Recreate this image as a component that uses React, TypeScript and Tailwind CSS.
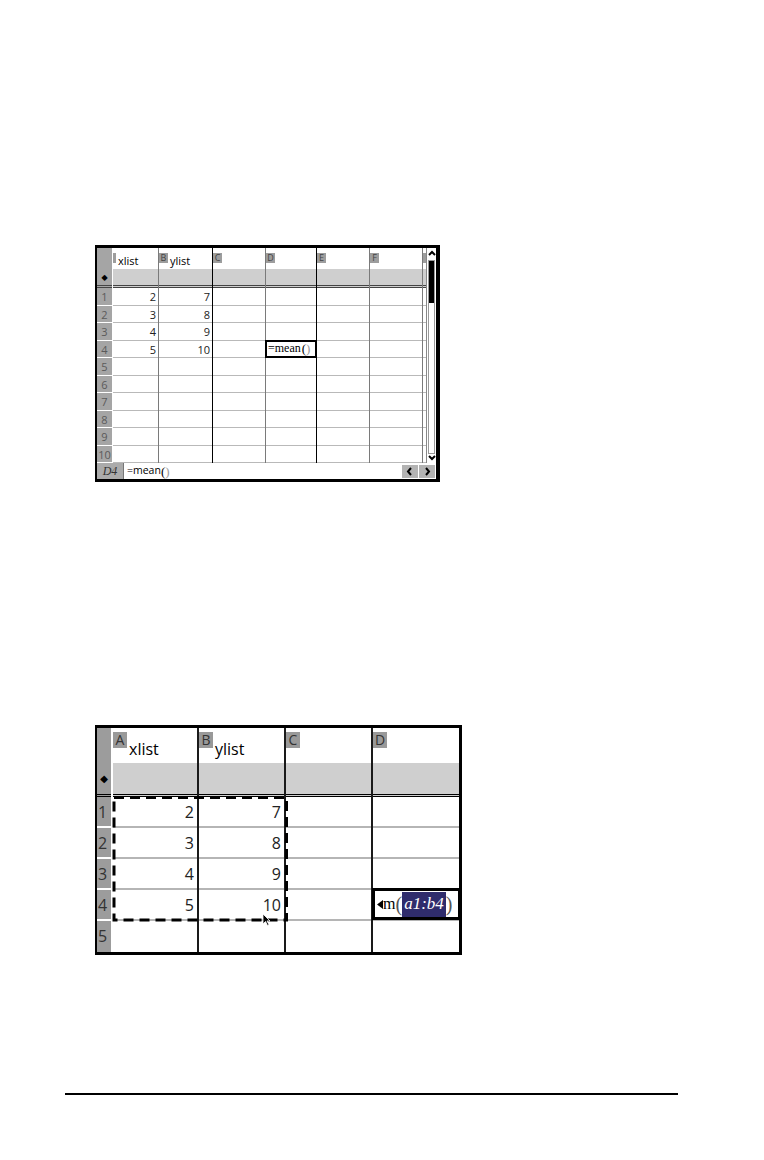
const sans = "font-['Open_Sans','DejaVu_Sans',sans-serif]";
const serif = "font-['Liberation_Serif','Times_New_Roman',serif]";

type Col = {
  letter: string;
  label?: string;
  w: string;
  line: string;
  values: string[];
  selected?: boolean;
};

const smallCols: Col[] = [
  { letter: "A", label: "xlist", w: "w-[46px]", line: "border-[#7a7a7a]", values: ["2", "3", "4", "5"] },
  { letter: "B", label: "ylist", w: "w-[54px]", line: "border-black", values: ["7", "8", "9", "10"] },
  { letter: "C", w: "w-[53px]", line: "border-[#7a7a7a]", values: [] },
  { letter: "D", w: "w-[51px]", line: "border-black", values: [], selected: true },
  { letter: "E", w: "w-[53px]", line: "border-[#7a7a7a]", values: [] },
  { letter: "F", w: "w-[53px]", line: "border-[#7a7a7a]", values: [] },
];

const bigCols: Col[] = [
  { letter: "A", label: "xlist", w: "w-[86px] border-r-2", line: "border-[#1a1a1a]", values: ["2", "3", "4", "5"] },
  { letter: "B", label: "ylist", w: "w-[87px] border-r-2", line: "border-[#1a1a1a]", values: ["7", "8", "9", "10"] },
  { letter: "C", w: "w-[87px] border-r-2", line: "border-[#1a1a1a]", values: [] },
  { letter: "D", w: "w-[86px]", line: "border-[#1a1a1a]", values: [], selected: true },
];

const tenRows = [1, 2, 3, 4, 5, 6, 7, 8, 9, 10];
const fiveRows = [1, 2, 3, 4, 5];

function Chevron({ dir }: { dir: "up" | "down" | "left" | "right" }) {
  const pts = {
    up: "1,5 4,2 7,5",
    down: "1,2 4,5 7,2",
    left: "5,1 2,4.5 5,8",
    right: "3,1 6,4.5 3,8",
  }[dir];
  return (
    <svg width="8" height="9" viewBox="0 0 8 9" className="block">
      <polyline points={pts} fill="none" stroke="black" strokeWidth="2" />
    </svg>
  );
}

function SmallSheet() {
  return (
    <div className={`ml-[95px] mt-[245px] flex w-[345px] flex-col self-start border-t-[3px] border-r-4 border-b-[3px] border-l-2 border-black ${sans}`}>
      <div className="flex">
        {/* row numbers */}
        <div className="flex w-[16px] flex-col border-r border-white bg-[#a5a5a5] text-[11px] text-[#5a5a5a]">
          <div className="h-[21px]" />
          <div className="flex h-[19px] items-center justify-center border-b-[3px] border-double border-[#444] text-[8px] text-black">◆</div>
          {tenRows.map((n) => (
            <div key={n} className="h-[17.5px] border-b border-white text-center leading-[17px]">
              {n}
            </div>
          ))}
        </div>

        {smallCols.map((c) => (
          <div key={c.letter} className={`flex ${c.w} flex-col border-r ${c.line}`}>
            <div className="flex h-[21px] items-start bg-white">
              {c.letter === "A" ? (
                <div className="mt-[5px] h-[10px] w-[3px] bg-[#9d9d9d]" />
              ) : (
                <div className="mt-[5px] h-[10px] w-[9px] bg-[#9d9d9d] text-center text-[9px] leading-[10px] text-[#444]">{c.letter}</div>
              )}
              {c.label && <div className="mt-[5px] ml-[2px] text-[11px] leading-[15px] text-black">{c.label}</div>}
            </div>
            <div className="h-[19px] border-b-[3px] border-double border-[#444] bg-[#cfcfcf]" />
            {tenRows.map((n) => (
              <div key={n} className="relative h-[17.5px] border-b border-[#b9b9b9] pr-[2px] text-right text-[11px] leading-[17px] text-[#222]">
                {c.values[n - 1] ?? ""}
                {c.selected && n === 4 && (
                  <div className={`absolute -top-px -left-px -right-px -bottom-px flex items-center border-2 border-black bg-white pl-[1px] text-left text-[12px] text-black ${serif}`}>
                    =mean
                    <span className="ml-[1px] text-[13px] leading-none">(</span>
                    <span className="text-[13px] leading-none text-[#999]">)</span>
                  </div>
                )}
              </div>
            ))}
          </div>
        ))}

        {/* clipped column G */}
        <div className="flex w-[3px] flex-col">
          <div className="h-[21px]">
            <div className="mt-[5px] h-[10px] w-[3px] bg-[#9d9d9d]" />
          </div>
          <div className="h-[19px] border-b-[3px] border-double border-[#444] bg-[#cfcfcf]" />
          {tenRows.map((n) => (
            <div key={n} className="h-[17.5px] border-b border-[#b9b9b9]" />
          ))}
        </div>

        {/* scrollbar */}
        <div className="flex w-[10px] flex-col border-l border-[#888] bg-white">
          <div className="flex h-[12px] items-end justify-center pb-[1px]">
            <Chevron dir="up" />
          </div>
          <div className="mx-[1px] flex flex-1 flex-col border border-[#999]">
            <div className="h-[42px] bg-black" />
          </div>
          <div className="flex h-[9px] items-center justify-center">
            <Chevron dir="down" />
          </div>
        </div>
      </div>

      {/* entry line */}
      <div className="flex h-[16px] items-center bg-white">
        <div className={`flex h-full w-[27px] items-center justify-center border-r border-[#777] bg-[#ababab] text-[12px] italic text-[#333] ${serif}`}>D4</div>
        <div className="flex items-center pl-[3px] text-[10.5px] text-black">
          =mean
          <span className={`text-[13px] leading-none ${serif}`}>(</span>
          <span className={`text-[13px] leading-none text-[#999] ${serif}`}>)</span>
        </div>
        <div className="flex-1" />
        <div className="mr-[1px] flex h-[13px] gap-px">
          <div className="flex w-[16px] items-center justify-center bg-[#b3b3b3]">
            <Chevron dir="left" />
          </div>
          <div className="flex w-[16px] items-center justify-center bg-[#b3b3b3]">
            <Chevron dir="right" />
          </div>
        </div>
      </div>
    </div>
  );
}

function BigSheet() {
  return (
    <div className={`relative mt-[243px] ml-[95px] flex w-[367px] self-start border-t-[3px] border-r-[3px] border-b-[3px] border-l-2 border-black ${sans}`}>
      <div className="flex w-[16px] flex-col border-r-2 border-white bg-[#9c9c9c] text-[16px] text-[#333]">
        <div className="h-[35px]" />
        <div className="flex h-[34px] items-center justify-center border-b-[3px] border-double border-black text-[10px] text-black">◆</div>
        {fiveRows.map((n) => (
          <div key={n} className="h-[31px] border-b-2 border-white pl-[1px] leading-[30px] last:border-b-0">
            {n}
          </div>
        ))}
      </div>

      {bigCols.map((c) => (
        <div key={c.letter} className={`flex ${c.w} flex-col ${c.line}`}>
          <div className="flex h-[35px] items-start bg-white">
            <div className="mt-[4px] h-[16px] w-[14px] bg-[#999] text-center text-[14px] leading-[16px] text-[#333]">{c.letter}</div>
            {c.label && <div className="mt-[10px] ml-[2px] text-[16px] leading-[22px] text-black">{c.label}</div>}
          </div>
          <div className="h-[34px] border-b-[3px] border-double border-black bg-[#cfcfcf]" />
          {fiveRows.map((n) => (
            <div key={n} className="relative h-[31px] border-b-2 border-[#b5b5b5] pr-[3px] text-right text-[16px] leading-[30px] text-[#222] last:border-b-0">
              {c.values[n - 1] ?? ""}
              {c.selected && n === 4 && (
                <div className={`absolute -top-[2px] -left-[1px] -right-[2px] -bottom-[1px] flex items-center overflow-hidden border-[3px] border-black bg-white pl-[2px] text-left text-black ${serif}`}>
                  <svg width="6" height="9" viewBox="0 0 6 9" className="shrink-0">
                    <polygon points="6,0 0,4.5 6,9" fill="black" />
                  </svg>
                  <span className="text-[16px] leading-none">m</span>
                  <span className="text-[20px] leading-none text-[#555]">(</span>
                  <span className="flex h-[25px] items-center bg-[#2f2c6c] px-[2px] text-[17px] italic text-white">a1:b4</span>
                  <span className="text-[20px] leading-none text-[#555]">)</span>
                </div>
              )}
            </div>
          ))}
        </div>
      ))}

      {/* copy marquee and pointer */}
      <svg className="pointer-events-none absolute top-0 left-0" width="362" height="224" viewBox="0 0 362 224">
        <path d="M17 69.5 H189.5 V192 H17 Z" fill="none" stroke="black" strokeWidth="3" strokeDasharray="10 6" />
        <path d="M166 186 L166 196 L168.5 193.5 L170.5 197.5 L172 196.8 L170 193 L173 193 Z" fill="black" stroke="white" strokeWidth="0.8" />
      </svg>
    </div>
  );
}

export default function App() {
  return (
    <div className="flex h-[1160px] w-[764px] flex-col overflow-hidden bg-white">
      <SmallSheet />
      <BigSheet />
      <div className="mt-[138px] ml-[65px] h-[1.5px] w-[613px] bg-black" />
    </div>
  );
}
